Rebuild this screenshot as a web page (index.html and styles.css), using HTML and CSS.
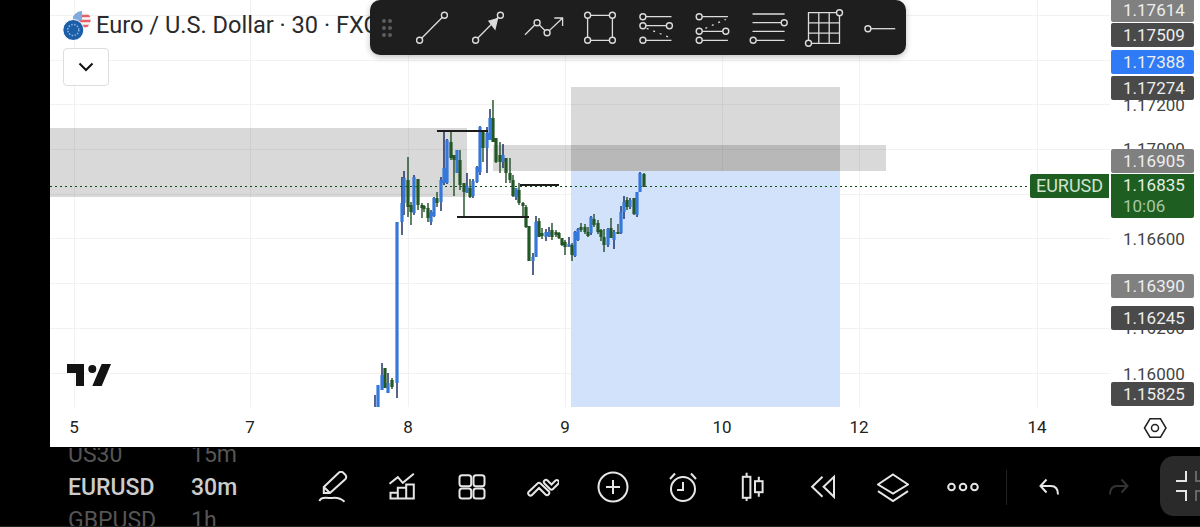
FILE: index.html
```html
<!DOCTYPE html>
<html lang="en">
<head>
    <meta charset="UTF-8">
    <meta name="viewport" content="width=device-width, initial-scale=1.0">
    <title>EURUSD chart</title>
    <link rel="stylesheet" href="styles.css">
</head>
<body>
    <div class="chart">
        <!-- plot, viewBox keeps screen coordinates -->
        <svg class="plot" viewBox="50 0 1150 447" width="1150" height="447">
            <defs>
                <clipPath id="plotClip"><rect x="50" y="0" width="1060" height="407"/></clipPath>
            </defs>
            <path class="grid" d="M50 15.500H1110M50 60.500H1110M50 104.500H1110M50 149.500H1110M50 194.500H1110M50 238.500H1110M50 283.500H1110M50 328.500H1110M50 373.500H1110M74.500 0V407M250.500 0V407M408.500 0V407M565.500 0V407M722.500 0V407M859.500 0V407M1037.500 0V407"/>
            <rect class="target" x="571" y="171" width="269" height="236"/>
            <rect class="zone" x="50" y="128" width="417" height="69"/>
            <rect class="zone" x="493" y="145" width="393" height="26"/>
            <rect class="zone" x="571" y="87" width="269" height="84"/>
            <path class="last-line" d="M50 186.500H1030"/>
            <g clip-path="url(#plotClip)">
                <path class="wick-up" d="M375 395V407M378 385V407M382 363V390M388 373V393M397 222V398M402 177V235M404 171V215M414 175V215M431 210V225M434 197V217M441 177V211M444 131V185M447 139V184M457 150V173M467 173V193M473 179V198M477 166V183M480 126V175M487 127V173M490 109V140M503 144V168M516 188V200M533 253V275M536 216V257M546 229V241M549 227V237M569 237V247M575 231V257M578 228V241M591 216V235M608 228V247M614 230V249M621 206V234M624 196V219M630 198V209M637 192V217M640 172V192"/>
                <path class="wick-down" d="M385 368V388M392 378V389M408 157V217M411 202V225M418 179V210M422 203V218M424 205V212M428 203V222M437 192V207M451 132V160M454 155V196M460 150V190M464 183V218M470 179V198M483 132V162M493 100V142M496 138V163M500 142V173M506 158V183M510 158V183M513 175V197M519 183V205M523 202V218M526 205V228M529 226V261M539 218V237M542 228V239M552 223V240M556 230V237M559 232V239M562 238V246M565 240V255M572 243V261M581 223V232M585 224V234M588 227V237M594 214V227M598 220V234M601 229V241M604 229V252M611 218V238M618 224V234M627 197V210M634 198V215M644 173V187"/>
                <path class="body-up" d="M378 385V407M382 375V390M388 383V393M397 222V383M402 203V222M404 178V203M414 177V213M431 212V222M434 198V216M441 180V202M444 168V183M447 140V183M457 150V173M467 186V193M473 181V196M477 167V182M480 127V172M487 133V148M490 118V140M503 155V162M516 188V197M533 257V261M536 222V257M546 232V237M549 232V236M569 244V247M575 232V256M578 229V240M591 217V233M608 229V245M614 232V240M621 212V233M624 202V212M630 200V207M637 192V215M640 173V192"/>
                <path class="body-down" d="M385 368V388M392 380V387M408 180V207M411 205V212M418 179V205M422 205V208M424 206V209M428 208V218M437 198V203M451 142V158M454 155V160M460 160V185M464 183V192M470 188V197M483 132V148M493 118V142M496 138V162M500 155V162M506 158V173M510 173V180M513 180V196M519 190V203M523 203V206M526 207V227M529 226V261M539 221V237M542 233V236M552 230V237M556 232V235M559 233V238M562 238V245M565 242V247M572 245V255M581 227V230M585 227V232M588 232V236M594 219V225M598 223V232M601 230V237M604 237V245M611 228V238M618 232V234M627 200V207M634 198V214M644 174V187"/>
            </g>
            <path class="level" d="M437 131H488M457 217H529M520 185H559"/>
            <!-- TV logo -->
            <path class="tv-logo" d="M67 364H84V386H76V373H67ZM101.700 364H111L101.700 386H92.300Z"/>
            <circle class="tv-logo" cx="92.300" cy="369" r="4"/>
            <!-- settings -->
            <path class="settings" d="M1144.500 428L1150 418.800H1160.500L1166 428L1160.500 437.200H1150Z"/>
            <circle class="settings" cx="1155" cy="428" r="3.500"/>
        </svg>

        <span class="price-tick tick-17200">1.17200</span>
        <span class="price-tick tick-17000">1.17000</span>
        <span class="price-tick tick-16600">1.16600</span>
        <span class="price-tick tick-16200">1.16200</span>
        <span class="price-tick tick-16000">1.16000</span>

        <span class="tag tag-light" style="top:-2px">1.17614</span>
        <span class="tag tag-dark" style="top:23px">1.17509</span>
        <span class="tag tag-blue" style="top:50px">1.17388</span>
        <span class="tag tag-dark" style="top:76px">1.17274</span>
        <span class="tag tag-light" style="top:149px">1.16905</span>
        <span class="tag tag-light" style="top:274px">1.16390</span>
        <span class="tag tag-dark" style="top:306px">1.16245</span>
        <span class="tag tag-dark" style="top:382px">1.15825</span>
        <span class="symbol-tag">EURUSD</span>
        <div class="last-price">
            <span>1.16835</span>
            <span class="countdown">10:06</span>
        </div>

        <span class="time-tick" style="left:24px">5</span>
        <span class="time-tick" style="left:200px">7</span>
        <span class="time-tick" style="left:358px">8</span>
        <span class="time-tick" style="left:515px">9</span>
        <span class="time-tick" style="left:672px">10</span>
        <span class="time-tick" style="left:809px">12</span>
        <span class="time-tick" style="left:987px">14</span>

        <div class="legend">
            <div class="title-row">
                <svg class="flag" viewBox="0 0 30 30" width="30" height="30">
                    <defs>
                        <clipPath id="usClip"><circle cx="19.700" cy="10" r="9"/></clipPath>
                    </defs>
                    <g clip-path="url(#usClip)">
                        <rect x="10" y="0" width="20" height="20" fill="#f7f7f7"/>
                        <path d="M10 6H30M10 11H30M10 16H30" stroke="#e4606a" stroke-width="2.400"/>
                        <rect x="10" y="0" width="10" height="10.500" fill="#7eaae0"/>
                    </g>
                    <circle cx="11.300" cy="20" r="10.500" fill="#1c5fa8" stroke="#fff" stroke-width="1"/>
                    <circle cx="11.300" cy="20" r="5.500" fill="none" stroke="#8fb8e6" stroke-width="1.500" stroke-dasharray="1.400 1.500"/>
                </svg>
                <span class="title">Euro / U.S. Dollar · 30 · FXCM</span>
            </div>
            <button class="collapse-btn">
                <svg viewBox="0 0 16 10" width="16" height="10"><path d="M1.500 1.500L8 8L14.500 1.500"/></svg>
            </button>
        </div>

        <!-- drawing toolbar -->
        <div class="draw-bar">
            <svg class="grip" viewBox="0 0 34 55" width="34" height="55">
                <path d="M14 21h.01M20 21h.01M14 28h.01M20 28h.01M14 35h.01M20 35h.01"/>
            </svg>
            <svg class="draw-icon" viewBox="0 0 56 55" width="56" height="55">
                <path d="M15.600 40.300L40.400 15.300"/>
                <circle cx="15.600" cy="40.300" r="3"/><circle cx="40.400" cy="15.300" r="3"/>
            </svg>
            <svg class="draw-icon" viewBox="0 0 56 55" width="56" height="55">
                <path d="M15.600 40.300L40.400 15.300"/>
                <path class="solid" d="M37.500 18.500L29 21L35 29Z"/>
                <circle cx="15.600" cy="40.300" r="3"/><circle cx="40.400" cy="15.300" r="3"/>
            </svg>
            <svg class="draw-icon" viewBox="0 0 56 55" width="56" height="55">
                <path d="M9 34.700L21.100 22.700L31.100 32.700L46.600 18M38.300 18H46.600V26"/>
                <circle cx="21.100" cy="22.700" r="3"/><circle cx="31.100" cy="32.700" r="3"/>
            </svg>
            <svg class="draw-icon" viewBox="0 0 56 55" width="56" height="55">
                <path d="M15.600 15.300H40.400V40.300H15.600Z"/>
                <circle cx="15.600" cy="15.300" r="3"/><circle cx="40.400" cy="15.300" r="3"/>
                <circle cx="15.600" cy="40.300" r="3"/><circle cx="40.400" cy="40.300" r="3"/>
            </svg>
            <svg class="draw-icon" viewBox="0 0 56 55" width="56" height="55">
                <path d="M14.900 16.700H43.500M14.900 25.700H41.400M14.900 40.300H43.500"/>
                <path class="dashed" d="M18.700 28.300L41.100 37.300"/>
                <circle cx="14.900" cy="16.700" r="3"/><circle cx="14.900" cy="25.700" r="3"/>
                <circle cx="41.400" cy="25.700" r="3"/><circle cx="14.900" cy="40.300" r="3"/>
            </svg>
            <svg class="draw-icon" viewBox="0 0 56 55" width="56" height="55">
                <path d="M15.200 16.700H43.900M15.200 31.300H41.800M15.200 40.300H43.900"/>
                <path class="dashed" d="M21.400 28.300L41.800 19.300"/>
                <circle cx="15.200" cy="16.700" r="3"/><circle cx="15.200" cy="31.300" r="3"/>
                <circle cx="41.800" cy="31.300" r="3"/><circle cx="15.200" cy="40.300" r="3"/>
            </svg>
            <svg class="draw-icon" viewBox="0 0 56 55" width="56" height="55">
                <path d="M12.500 14H44.600M12.500 22.700H44.200M12.500 31.300H44.600M13.200 40.300H44.600"/>
                <circle cx="44.200" cy="22.700" r="3"/><circle cx="13.200" cy="40.300" r="3"/>
            </svg>
            <svg class="draw-icon" viewBox="0 0 56 55" width="56" height="55">
                <path d="M12.500 12.700H43.500V43.300H12.500ZM22.800 12.700V43.300M33.200 12.700V43.300M12.500 22.900H43.500M12.500 33.100H43.500"/>
                <circle cx="43.500" cy="12.700" r="3"/><circle cx="12.500" cy="43.300" r="3"/>
            </svg>
            <svg class="draw-icon" viewBox="0 0 56 55" width="56" height="55">
                <path d="M15.900 28.700H43.200"/>
                <circle cx="15.900" cy="28.700" r="3"/>
            </svg>
        </div>
    </div>

    <div class="bottom-bar">
        <div class="pair-list">
            <div class="pair-row"><span class="pair-name">US30</span><span>15m</span></div>
            <div class="pair-row current"><span class="pair-name">EURUSD</span><span>30m</span></div>
            <div class="pair-row"><span class="pair-name">GBPUSD</span><span>1h</span></div>
        </div>
        <div class="tools">
            <div class="tool"><svg viewBox="0 0 32 32" width="32" height="32">
                <path d="M6.800 22V16L22 1.500Q24 0 26 1.500L28.500 4Q30 6 28.500 8L13 22ZM6.800 16L13 22"/>
                <path d="M2.500 30.200C3 27 8 26.500 12 27S21 24.500 27.500 30.800"/>
            </svg></div>
            <div class="tool"><svg viewBox="0 0 32 32" width="32" height="32">
                <path d="M2.500 12.800L10.800 6.200L15.800 11.800L26.800 2.800"/>
                <path d="M3.500 21.800H10.800V27.500H3.500ZM10.800 27.500V16.800H19.200V27.500ZM19.200 13.500H26.800V27.500H19.200Z"/>
            </svg></div>
            <div class="tool"><svg viewBox="0 0 32 32" width="32" height="32">
                <rect x="2.500" y="4.200" width="11.700" height="11" rx="2.500"/><rect x="16.500" y="4.200" width="11" height="11" rx="2.500"/>
                <rect x="2.500" y="17.500" width="11.700" height="10" rx="2.500"/><rect x="16.500" y="17.500" width="11" height="10" rx="2.500"/>
            </svg></div>
            <div class="tool"><svg viewBox="0 0 32 32" width="32" height="32">
                <path transform="translate(0 2)" d="M1.500 19L10.500 10.500Q12 9 13.500 10.500L22 18.500Q23 20 21.500 21.500Q20 23 18.500 21.500L12 15L5 22Q3.500 23.500 2 22Q.5 20.500 1.500 19Z"/>
                <path transform="translate(0 3.500)" d="M17.500 6Q19 4.500 20.500 6L24.500 10L28.500 6Q30 5 31 6Q32.500 7.500 31.500 9L26 14.500Q24.500 16 23 14.500L17.500 9Q16 7.500 17.500 6Z"/>
            </svg></div>
            <div class="tool"><svg viewBox="0 0 32 32" width="32" height="32">
                <circle cx="16" cy="16" r="14.500"/><path d="M16 9V23M9 16H23"/>
            </svg></div>
            <div class="tool"><svg viewBox="0 0 32 32" width="32" height="32">
                <circle cx="16" cy="18" r="12"/><path d="M16 11V19H10M3 8L8 2.500M29 8L24 2.500"/>
            </svg></div>
            <div class="tool"><svg viewBox="0 0 32 32" width="32" height="32">
                <rect x="5.800" y="5.800" width="7.600" height="21"/><path d="M9.600 1.800V5.800M9.600 26.800V30"/>
                <rect x="18" y="10.200" width="7.600" height="11"/><path d="M21.800 5.800V10.200M21.800 21.200V25.800"/>
            </svg></div>
            <div class="tool"><svg viewBox="0 0 32 32" width="32" height="32">
                <path d="M15.500 5.800L5.100 15.800L15.500 25.800"/><path d="M27 5.800V25.800L16.600 15.800Z"/>
            </svg></div>
            <div class="tool"><svg viewBox="0 0 32 32" width="32" height="32">
                <path d="M16 3.500L31 13.500L16 22.500L1 13.500Z"/><path d="M1 20.200L16 30L31 20.200"/>
            </svg></div>
            <div class="tool"><svg viewBox="0 0 32 32" width="32" height="32">
                <circle cx="4.500" cy="16" r="3.300"/><circle cx="16" cy="16" r="3.300"/><circle cx="27.500" cy="16" r="3.300"/>
            </svg></div>
        </div>
        <div class="divider"></div>
        <div class="tool"><svg viewBox="0 0 32 32" width="32" height="32">
            <path d="M13.500 8.500L7.500 15L13.500 21.500M7.500 15H18Q25 15 25 23.500"/>
        </svg></div>
        <div class="tool disabled"><svg viewBox="0 0 32 32" width="32" height="32">
            <path d="M18.500 8.500L24.500 15L18.500 21.500M24.500 15H14Q7 15 7 23.500"/>
        </svg></div>
        <div class="fullscreen-btn">
            <svg viewBox="0 0 41 60" width="41" height="60">
                <path d="M26 15V25H16M16 35H26V45"/>
                <path class="dim" d="M36 15V25H41M41 35H36V45"/>
            </svg>
        </div>
    </div>
</body>
</html>
```

FILE: styles.css
```css
html, body {
    margin: 0;
    padding: 0;
    background-color: #000;
    width: 1200px;
    height: 527px;
    overflow: hidden;
    font-family: Roboto, "Liberation Sans", sans-serif;
}
.chart {
    position: relative;
    margin-left: 50px;
    height: 447px;
    background-color: #fff;
    overflow: hidden;
}
.plot {
    position: absolute;
    left: 0;
    top: 0;
}
.grid {
    stroke: #f2f2f2;
    stroke-width: 1;
    fill: none;
}
.target {
    fill: #d2e2fb;
}
.zone {
    fill: rgba(0, 0, 0, 0.15);
}
.last-line {
    stroke: #0f4a12;
    stroke-width: 1.2;
    stroke-dasharray: 2 3;
    fill: none;
}
.wick-up, .wick-down, .body-up, .body-down, .level {
    fill: none;
}
.wick-up {
    stroke: #10245f;
    stroke-width: 1.4;
}
.wick-down {
    stroke: #1f4f24;
    stroke-width: 1.4;
}
.body-up {
    stroke: #3578da;
    stroke-width: 3.2;
}
.body-down {
    stroke: #235726;
    stroke-width: 3.2;
}
.level {
    stroke: #1c1c1c;
    stroke-width: 1.8;
}
.tv-logo {
    fill: #131313;
}
.settings {
    fill: none;
    stroke: #222;
    stroke-width: 1.5;
}

/* price axis */
.price-tick {
    position: absolute;
    left: 1073px;
    font-size: 17px;
    line-height: 24px;
    color: #444;
}
.tick-17200 { top: 93px; }
.tick-17000 { top: 137px; }
.tick-16600 { top: 227px; }
.tick-16200 { top: 316px; }
.tick-16000 { top: 362px; }
.tag {
    position: absolute;
    left: 1061px;
    width: 83px;
    height: 24px;
    padding-left: 12px;
    box-sizing: border-box;
    border-radius: 2px;
    font-size: 17px;
    line-height: 24px;
    color: #eee;
}
.tag-light { background-color: #808080; }
.tag-dark { background-color: #4a4a4a; }
.tag-blue { background-color: #2f7bf5; }
.symbol-tag {
    position: absolute;
    left: 980px;
    top: 174px;
    width: 79px;
    height: 24px;
    border-radius: 2px 0 0 2px;
    background-color: #1e5e20;
    color: #cfe3cf;
    font-size: 18px;
    line-height: 24px;
    text-align: center;
}
.last-price {
    position: absolute;
    left: 1061px;
    top: 174px;
    width: 83px;
    height: 44px;
    padding: 1px 0 0 12px;
    box-sizing: border-box;
    display: flex;
    flex-direction: column;
    border-radius: 0 0 2px 2px;
    background-color: #1e5e20;
    color: #e4efe4;
    font-size: 17px;
    line-height: 21px;
}
.countdown {
    color: #a6c9a6;
}

/* time axis */
.time-tick {
    position: absolute;
    top: 417px;
    width: 0;
    display: flex;
    justify-content: center;
    font-size: 17px;
    line-height: 20px;
    color: #222;
}

/* legend */
.legend {
    position: absolute;
    left: 12px;
    top: 10px;
}
.title-row {
    display: flex;
    align-items: center;
    gap: 4px;
}
.flag {
    flex-shrink: 0;
}
.title {
    font-size: 23.6px;
    line-height: 30px;
    color: #2a2a2a;
    white-space: nowrap;
}
.collapse-btn {
    display: flex;
    align-items: center;
    justify-content: center;
    width: 46px;
    height: 38px;
    margin: 8px 0 0 1px;
    padding: 0;
    border: 1.5px solid #ddd;
    border-radius: 4px;
    background-color: #fff;
}
.collapse-btn path {
    fill: none;
    stroke: #111;
    stroke-width: 2;
}

/* drawing toolbar */
.draw-bar {
    position: absolute;
    left: 320px;
    top: 0;
    width: 536px;
    height: 55px;
    display: flex;
    border-radius: 10px;
    background-color: #1e1e1e;
    box-shadow: 0 2px 6px rgba(0, 0, 0, 0.25);
}
.grip, .draw-icon {
    flex-shrink: 0;
}
.grip path {
    fill: none;
    stroke: #5c5c5c;
    stroke-width: 4;
    stroke-linecap: round;
}
.draw-icon path {
    fill: none;
    stroke: #dcdcdc;
    stroke-width: 1.3;
}
.draw-icon circle {
    fill: #1e1e1e;
    stroke: #dcdcdc;
    stroke-width: 1.4;
}
.draw-icon .solid {
    fill: #dcdcdc;
}
.draw-icon .dashed {
    stroke-dasharray: 2 5;
}

/* bottom bar */
.bottom-bar {
    display: flex;
    align-items: center;
    height: 78px;
    margin-top: 1px;
    border-bottom: 1px solid #222;
    overflow: hidden;
}
.pair-list {
    display: flex;
    flex-direction: column;
    justify-content: center;
    flex-shrink: 0;
    width: 230px;
    height: 78px;
    padding-left: 68px;
    overflow: hidden;
}
.pair-row {
    display: flex;
    flex-shrink: 0;
    height: 33px;
    align-items: center;
    font-size: 23px;
    color: #555;
}
.pair-row.current {
    color: #ccc;
    font-weight: 500;
}
.pair-name {
    width: 123px;
}
.tools {
    display: flex;
}
.tool {
    display: flex;
    align-items: center;
    justify-content: center;
    flex-shrink: 0;
    width: 70px;
    height: 78px;
}
.tool path, .tool rect, .tool circle {
    fill: none;
    stroke: #e6e6e6;
    stroke-width: 2;
}
.tool.disabled path {
    stroke: #333;
}
.divider {
    flex-shrink: 0;
    width: 1px;
    height: 35px;
    margin: 0 7px 0 8px;
    background-color: #222;
}
.fullscreen-btn {
    flex-shrink: 0;
    width: 41px;
    height: 60px;
    margin: -2px 0 0 6px;
    border-radius: 14px 0 0 14px;
    background-color: #2a2a2a;
}
.fullscreen-btn path {
    fill: none;
    stroke: #e6e6e6;
    stroke-width: 2;
}
.fullscreen-btn .dim {
    stroke: #666;
}
```
